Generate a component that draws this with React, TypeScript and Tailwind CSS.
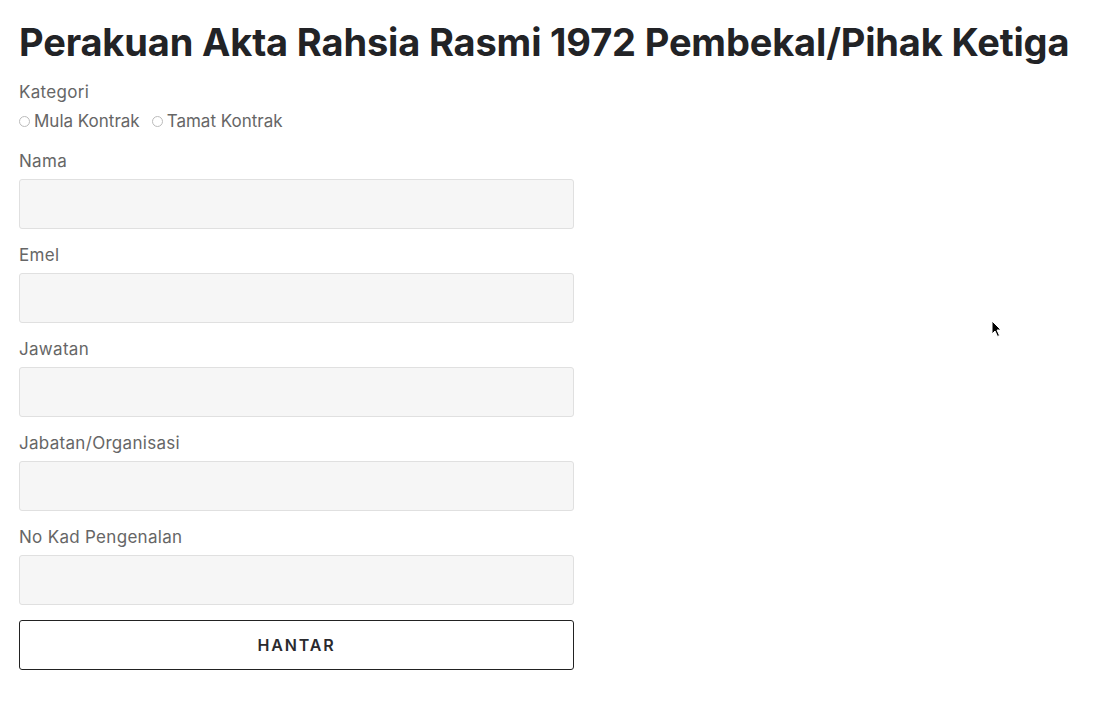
import React from "react";

const fields = ["Nama", "Emel", "Jawatan", "Jabatan/Organisasi", "No Kad Pengenalan"];

export default function App() {
  return (
    <main
      className="relative min-h-[703px] bg-white px-[19px] pt-[18px] text-[#666]"
      style={{ fontFamily: "Inter, 'Noto Sans', sans-serif" }}
    >
      {/* Cursor */}
      <svg className="absolute left-[991px] top-[320px]" width="11" height="18" viewBox="0 0 11 18">
        <path d="M1 1 L1 14 L4 11 L6.5 16.5 L8.5 15.5 L6 10 L10 10 Z" fill="#000" stroke="#fff" strokeWidth="1" />
      </svg>

      <h1 className="text-[38px] font-bold leading-[48px] tracking-[-0.15px] text-[#222326] whitespace-nowrap">
        Perakuan Akta Rahsia Rasmi 1972 Pembekal/Pihak Ketiga
      </h1>

      <div className="mt-[14px] w-[555px] text-[17px] tracking-[0.3px]">
        <div className="h-[24px] leading-[23px] pt-px">Kategori</div>
        <div className="mt-[5px] flex items-center h-[24px] pt-px tracking-normal">
          <label className="flex items-center gap-[4px] mr-[12px]">
            <span className="w-[11px] h-[11px] rounded-full border border-[#bbb] bg-white" />
            Mula Kontrak
          </label>
          <label className="flex items-center gap-[4px]">
            <span className="w-[11px] h-[11px] rounded-full border border-[#bbb] bg-white" />
            Tamat Kontrak
          </label>
        </div>

        <div className="mt-[16px] flex flex-col gap-[14px]">
          {fields.map((f) => (
            <div key={f} className="flex flex-col gap-[6px]">
              <div className="h-[24px] leading-[23px] pt-px">{f}</div>
              <input className="h-[50px] w-full rounded-[3px] border border-[#e0e0e0] bg-[#f6f6f6] outline-none" />
            </div>
          ))}
        </div>

        <button className="mt-[15px] h-[50px] w-full rounded-[3px] border border-[#222] bg-white text-[16px] font-semibold tracking-[1.8px] text-[#2a2a2e]">
          HANTAR
        </button>
      </div>
    </main>
  );
}
